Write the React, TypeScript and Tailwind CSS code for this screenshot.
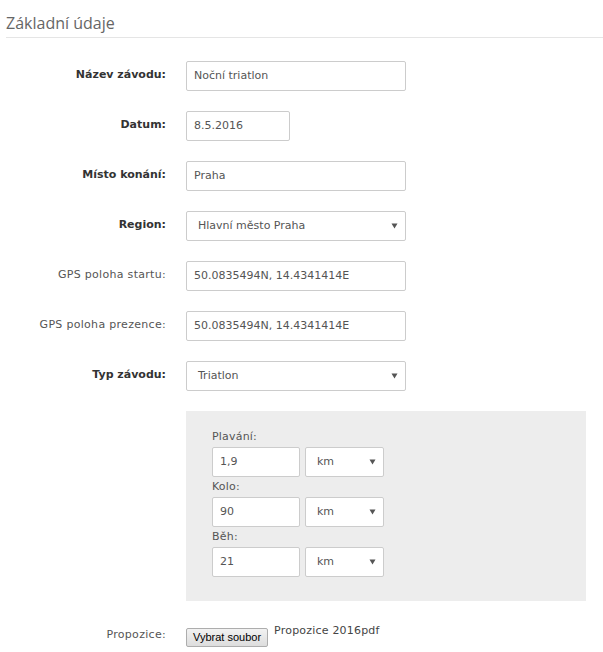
import clsx from "clsx";

const font = "font-['DejaVu_Sans',Verdana,sans-serif]";

function Caret() {
  return (
    <svg width="7" height="6" viewBox="0 0 7 6" className="shrink-0">
      <path d="M0.5 0.5h6L3.5 5.5z" fill="#555" />
    </svg>
  );
}

function TextBox(props: { value: string; width: string }) {
  return (
    <div
      className={clsx(
        props.width,
        "h-[30px] flex items-center px-[7px] border border-[#cccccc] rounded-[2px] bg-white text-[11px] text-[#555]"
      )}
    >
      {props.value}
    </div>
  );
}

function SelectBox(props: { value: string; width: string }) {
  return (
    <div
      className={clsx(
        props.width,
        "h-[30px] flex items-center justify-between pl-[11px] pr-[7px] border border-[#cccccc] rounded-[2px] bg-white text-[11px] text-[#555]"
      )}
    >
      <span>{props.value}</span>
      <Caret />
    </div>
  );
}

function Row(props: { label: string; bold?: boolean; children: React.ReactNode }) {
  return (
    <div className="flex items-start mb-[20px]">
      <div
        className={clsx(
          props.bold ? "font-bold text-[#333]" : "text-[#555] tracking-[0.3px]",
          "w-[166px] shrink-0 text-right pt-[6px] leading-[16px] text-[11px]"
        )}
      >
        {props.label}
      </div>
      <div className="ml-[20px]">{props.children}</div>
    </div>
  );
}

function Discipline(props: { label: string; value: string }) {
  return (
    <div>
      <div className="h-[20px] flex items-center text-[11px] text-[#555] tracking-[0.2px]">
        {props.label}
      </div>
      <div className="flex gap-[5px]">
        <TextBox value={props.value} width="w-[88px]" />
        <SelectBox value="km" width="w-[79px]" />
      </div>
    </div>
  );
}

function App() {
  return (
    <div className={clsx(font, "w-[603px] h-[652px] bg-white overflow-hidden")}>
      <h2 className="ml-[6px] pt-[13px] pb-[4px] leading-[20px] text-[16px] text-[#666] border-b border-[#e5e5e5] font-['Open_Sans',sans-serif]">
        Základní údaje
      </h2>
      <div className="mt-[23px]">
        <Row label="Název závodu:" bold>
          <TextBox value="Noční triatlon" width="w-[220px]" />
        </Row>
        <Row label="Datum:" bold>
          <TextBox value="8.5.2016" width="w-[104px]" />
        </Row>
        <Row label="Místo konání:" bold>
          <TextBox value="Praha" width="w-[220px]" />
        </Row>
        <Row label="Region:" bold>
          <SelectBox value="Hlavní město Praha" width="w-[220px]" />
        </Row>
        <Row label="GPS poloha startu:">
          <TextBox value="50.0835494N, 14.4341414E" width="w-[220px]" />
        </Row>
        <Row label="GPS poloha prezence:">
          <TextBox value="50.0835494N, 14.4341414E" width="w-[220px]" />
        </Row>
        <Row label="Typ závodu:" bold>
          <SelectBox value="Triatlon" width="w-[220px]" />
        </Row>
        <div className="ml-[186px] w-[400px] h-[190px] bg-[#ededed] pl-[26px] pt-[16px]">
          <Discipline label="Plavání:" value="1,9" />
          <Discipline label="Kolo:" value="90" />
          <Discipline label="Běh:" value="21" />
        </div>
        <div className="flex items-start mt-[27px]">
          <div className="w-[166px] shrink-0 text-right leading-[14px] text-[11px] text-[#555] tracking-[0.3px]">
            Propozice:
          </div>
          <button className="ml-[20px] h-[19px] px-[6px] border border-[#adadad] rounded-[2px] bg-gradient-to-b from-[#f2f2f2] to-[#dddddd] text-[11px] leading-[17px] text-black font-['Liberation_Sans',Arial,sans-serif]">
            Vybrat soubor
          </button>
          <span className="ml-[6px] -mt-[3px] leading-[12px] text-[11px] text-[#444] tracking-[0.2px]">
            Propozice 2016pdf
          </span>
        </div>
      </div>
    </div>
  );
}

export default App;
